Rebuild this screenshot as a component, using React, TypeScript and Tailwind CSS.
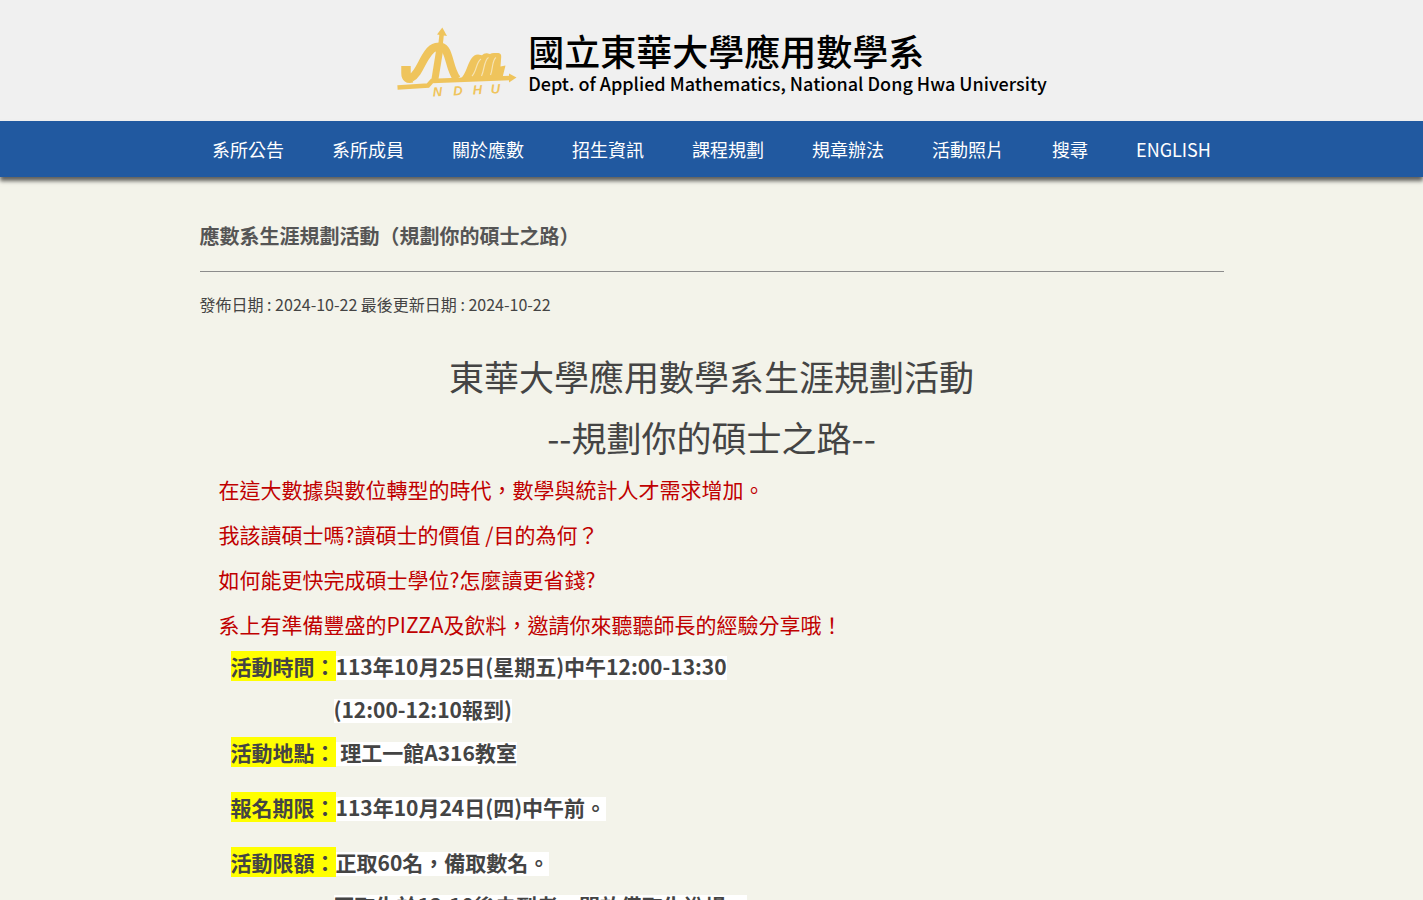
import type { ReactNode } from 'react';

const nav = ['系所公告', '系所成員', '關於應數', '招生資訊', '課程規劃', '規章辦法', '活動照片', '搜尋', 'ENGLISH'];

const questions = [
  '在這大數據與數位轉型的時代，數學與統計人才需求增加。',
  '我該讀碩士嗎?讀碩士的價值 /目的為何？',
  '如何能更快完成碩士學位?怎麼讀更省錢?',
  '系上有準備豐盛的PIZZA及飲料，邀請你來聽聽師長的經驗分享哦！',
];

function Logo() {
  return (
    <svg viewBox="390 15 140 95" className="h-[95px] w-[140px] shrink-0" role="img" aria-label="NDHU">
      <g fill="none" stroke="#efc45c">
        <path d="M399.500 87.5 L430 85.500 L434 81 L512 78" strokeWidth="4.500" />
        <path d="M442.500 45 L443.800 33" strokeWidth="4.500" />
        <path d="M408 66 V73 Q408 79.500 414 78" strokeWidth="9.500" />
        <path d="M413 78 C423 73 426 50 438 47 C453 43 449 66 459 79" strokeWidth="8" />
        <path d="M442 48 L436.500 82" strokeWidth="7" />
      </g>
      <g fill="#efc45c">
        <path d="M444.300 27.500 L449 36 L439 34.500 Z" />
        <path d="M511 73.500 L518.500 77.500 L511 82.500 Z" />
        <path d="M460 80 C470 77 469 55 480 54.500 L484 55.200 Q486 53 489 53.300 L492 54 Q494 52.700 497 53 H500.500 Q503.500 53.500 503.200 57 L502.500 66.500 L507.500 65.500 L504.500 77.500 L484 80 Z" />
      </g>
      <g fill="none" stroke="#f6e3b4" strokeWidth="1.200">
        <path d="M474 76 C479 71 478 62 483 59" />
        <path d="M483.500 76 C486.500 70 486 60 490.500 57.500" />
        <path d="M492.500 75 C495 69 494 60 498 57.500" />
      </g>
      <g fill="#efc45c" transform="rotate(-3 435 96)" fontFamily="Liberation Sans, sans-serif" fontSize="13" fontWeight="bold" fontStyle="italic">
        <text x="435" y="96.500">N</text>
        <text x="455.500" y="96.500">D</text>
        <text x="475" y="96.500">H</text>
        <text x="493" y="96.500">U</text>
      </g>
    </svg>
  );
}

function Label({ children }: { children: ReactNode }) {
  return <span className="bg-[#ffff00]">{children}</span>;
}

function Value({ children }: { children: ReactNode }) {
  return <span className="inline-block bg-white pb-1 leading-[20px] whitespace-pre">{children}</span>;
}

export default function App() {
  return (
    <div className="min-h-screen bg-[#f3f3ea] font-['Noto_Sans_CJK_TC',sans-serif] text-[#444]">
      <header className="bg-[#f0f0f0] pt-[15px] pb-[11px] text-black">
        <a href="#" className="mx-auto flex w-fit max-w-full pr-3 pl-6">
          <Logo />
          <span className="flex flex-col pt-[15px]">
            <span className="text-[36px] leading-[40px] font-medium">國立東華大學應用數學系</span>
            <span className="text-[18px] leading-[26px] font-medium">Dept. of Applied Mathematics, National Dong Hwa University</span>
          </span>
        </a>
      </header>
      <nav className="flex flex-wrap justify-center bg-[#2159a0] py-[15px] text-white shadow-[0_4px_4px_#00000099]">
        {nav.map((item) => (
          <a key={item} href="#" className="px-6 text-[18px] leading-[26px]">{item}</a>
        ))}
      </nav>
      <main className="mx-auto w-full max-w-[1024px] pt-[44px] pb-10">
        <h1 className="border-b border-[#8c8c8c] pb-5 text-[20px] leading-[30px] font-bold text-[#555]">
          應數系生涯規劃活動（規劃你的碩士之路）
        </h1>
        <p className="pt-5 text-[16px] leading-[24px]">發佈日期 : 2024-10-22 最後更新日期 : 2024-10-22</p>
        <article className="pt-[29px]">
          <div className="text-center text-[35px] leading-[61px]">
            <p>東華大學應用數學系生涯規劃活動</p>
            <p>--規劃你的碩士之路--</p>
          </div>
          <div className="pl-[19px] text-[21px] leading-[45px] text-[#c00000]">
            {questions.map((q) => (
              <p key={q}>{q}</p>
            ))}
          </div>
          <div className="-mt-0.5 pl-[31px] text-[21px] leading-[43px] font-bold">
            <p><Label>活動時間：</Label><Value>113年10月25日(星期五)中午12:00-13:30</Value></p>
            <p className="pl-[103px]"><Value>(12:00-12:10報到)</Value></p>
            <p><Label>活動地點：</Label><Value>{' 理工一館A316教室'}</Value></p>
            <p className="pt-3"><Label>報名期限：</Label><Value>113年10月24日(四)中午前。</Value></p>
            <p className="pt-3"><Label>活動限額：</Label><Value>正取60名，備取數名。</Value></p>
            <p className="pl-[103px]"><Value>正取生於12:10後未到者，開放備取生進場。</Value></p>
          </div>
        </article>
      </main>
    </div>
  );
}
